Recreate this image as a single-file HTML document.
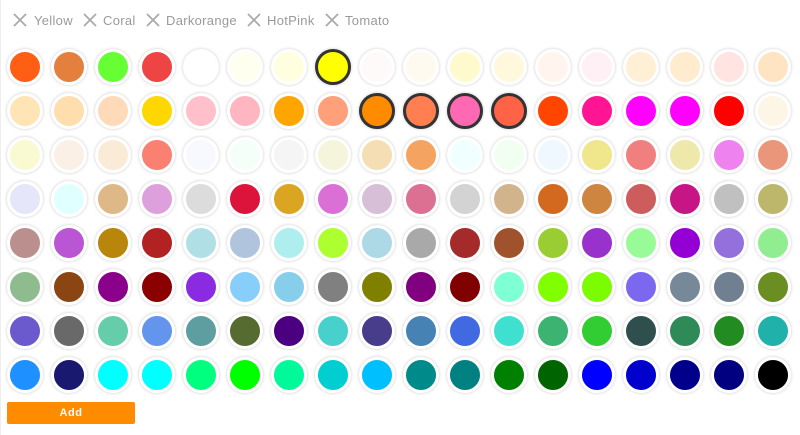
<!DOCTYPE html>
<html><head><meta charset="utf-8"><style>
*{margin:0;padding:0;box-sizing:border-box}
body{width:800px;height:435px;background:#fff;font-family:"Liberation Sans",sans-serif;position:relative;overflow:hidden}
.edge{position:absolute;left:0;top:0;width:1px;height:435px;background:#eee}
.tag{position:absolute;top:13px;font-size:13px;color:#9a9a9a;letter-spacing:0.3px;line-height:16px}
.x{position:absolute;top:13px;width:14px;height:14px}
.c{position:absolute;width:36px;height:36px;border-radius:50%;border:3px solid #fff;box-shadow:0 0 3px rgba(0,0,0,.22)}
.c.s{border-color:#333}
.btn{position:absolute;left:7px;top:402px;width:128px;height:22px;background:#ff8c00;color:#fff;font-size:11px;font-weight:bold;text-align:center;line-height:22px;border-radius:2px;letter-spacing:.5px}
</style></head><body>
<div class="edge"></div>
<svg class="x" style="left:13px" viewBox="0 0 14 14"><path d="M1 1L13 13M13 1L1 13" stroke="#aaa" stroke-width="1.8"/></svg><div class="tag" style="left:34px">Yellow</div>
<svg class="x" style="left:83px" viewBox="0 0 14 14"><path d="M1 1L13 13M13 1L1 13" stroke="#aaa" stroke-width="1.8"/></svg><div class="tag" style="left:103px">Coral</div>
<svg class="x" style="left:146px" viewBox="0 0 14 14"><path d="M1 1L13 13M13 1L1 13" stroke="#aaa" stroke-width="1.8"/></svg><div class="tag" style="left:166px">Darkorange</div>
<svg class="x" style="left:247px" viewBox="0 0 14 14"><path d="M1 1L13 13M13 1L1 13" stroke="#aaa" stroke-width="1.8"/></svg><div class="tag" style="left:267px">HotPink</div>
<svg class="x" style="left:325px" viewBox="0 0 14 14"><path d="M1 1L13 13M13 1L1 13" stroke="#aaa" stroke-width="1.8"/></svg><div class="tag" style="left:345px">Tomato</div>
<div id="g"></div>
<div class="btn">Add</div>
<script>
var cols=["#ff5e14","#e3803e","#66ff33","#ef4444","#ffffff","#fffff0","#ffffe0","#ffff00","#fffafa","#fffaf0","#fffacd","#fff8dc","#fff5ee","#fff0f5","#ffefd5","#ffebcd","#ffe4e1","#ffe4c4",
"#ffe4b5","#ffdead","#ffdab9","#ffd700","#ffc0cb","#ffb6c1","#ffa500","#ffa07a","#ff8c00","#ff7f50","#ff69b4","#ff6347","#ff4500","#ff1493","#ff00ff","#ff00ff","#ff0000","#fdf5e6",
"#fafad2","#faf0e6","#faebd7","#fa8072","#f8f8ff","#f5fffa","#f5f5f5","#f5f5dc","#f5deb3","#f4a460","#f0ffff","#f0fff0","#f0f8ff","#f0e68c","#f08080","#eee8aa","#ee82ee","#e9967a",
"#e6e6fa","#e0ffff","#deb887","#dda0dd","#dcdcdc","#dc143c","#daa520","#da70d6","#d8bfd8","#db7093","#d3d3d3","#d2b48c","#d2691e","#cd853f","#cd5c5c","#c71585","#c0c0c0","#bdb76b",
"#bc8f8f","#ba55d3","#b8860b","#b22222","#b0e0e6","#b0c4de","#afeeee","#adff2f","#add8e6","#a9a9a9","#a52a2a","#a0522d","#9acd32","#9932cc","#98fb98","#9400d3","#9370db","#90ee90",
"#8fbc8f","#8b4513","#8b008b","#8b0000","#8a2be2","#87cefa","#87ceeb","#808080","#808000","#800080","#800000","#7fffd4","#7fff00","#7cfc00","#7b68ee","#778899","#708090","#6b8e23",
"#6a5acd","#696969","#66cdaa","#6495ed","#5f9ea0","#556b2f","#4b0082","#48d1cc","#483d8b","#4682b4","#4169e1","#40e0d0","#3cb371","#32cd32","#2f4f4f","#2e8b57","#228b22","#20b2aa",
"#1e90ff","#191970","#00ffff","#00ffff","#00ff7f","#00ff00","#00fa9a","#00ced1","#00bfff","#008b8b","#008080","#008000","#006400","#0000ff","#0000cd","#00008b","#000080","#000000"];
var sel={7:1,26:1,27:1,28:1,29:1},h="";
for(var i=0;i<cols.length;i++){var r=Math.floor(i/18),c=i%18;
h+='<div class="c'+(sel[i]?' s':'')+'" style="left:'+(7+44*c)+'px;top:'+(49+44*r)+'px;background:'+cols[i]+'"></div>';}
document.getElementById("g").innerHTML=h;
</script>
</body></html>
